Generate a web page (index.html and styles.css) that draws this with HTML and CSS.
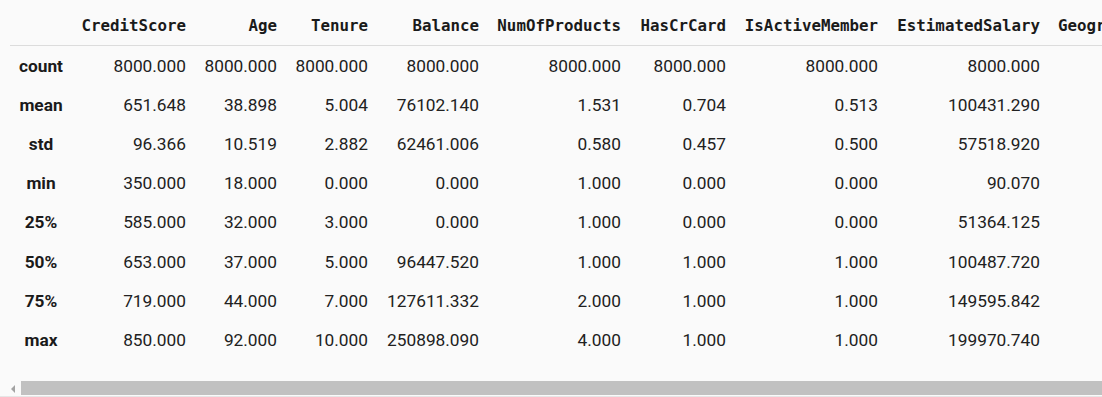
FILE: index.html
```html
<!DOCTYPE html>
<html lang="en">
  <head>
    <meta charset="UTF-8" />
    <title>describe()</title>
    <link rel="stylesheet" href="styles.css">
  </head>
  <body>
    <div class="output">
      <div class="output__frame">
        <table class="df">
          <colgroup>
            <col class="df__col-index" />
            <col style="width: 114px" />
            <col style="width: 91px" />
            <col style="width: 91px" />
            <col style="width: 111px" />
            <col style="width: 142px" />
            <col style="width: 105px" />
            <col style="width: 152px" />
            <col style="width: 162px" />
            <col style="width: 179px" />
          </colgroup>
          <thead>
            <tr class="df__head">
              <th></th>
              <th>CreditScore</th>
              <th>Age</th>
              <th>Tenure</th>
              <th>Balance</th>
              <th>NumOfProducts</th>
              <th>HasCrCard</th>
              <th>IsActiveMember</th>
              <th>EstimatedSalary</th>
              <th>Geography_Germany</th>
            </tr>
          </thead>
          <tbody>
            <tr>
              <th>count</th>
              <td>8000.000</td><td>8000.000</td><td>8000.000</td><td>8000.000</td>
              <td>8000.000</td><td>8000.000</td><td>8000.000</td><td>8000.000</td><td></td>
            </tr>
            <tr>
              <th>mean</th>
              <td>651.648</td><td>38.898</td><td>5.004</td><td>76102.140</td>
              <td>1.531</td><td>0.704</td><td>0.513</td><td>100431.290</td><td></td>
            </tr>
            <tr>
              <th>std</th>
              <td>96.366</td><td>10.519</td><td>2.882</td><td>62461.006</td>
              <td>0.580</td><td>0.457</td><td>0.500</td><td>57518.920</td><td></td>
            </tr>
            <tr>
              <th>min</th>
              <td>350.000</td><td>18.000</td><td>0.000</td><td>0.000</td>
              <td>1.000</td><td>0.000</td><td>0.000</td><td>90.070</td><td></td>
            </tr>
            <tr>
              <th>25%</th>
              <td>585.000</td><td>32.000</td><td>3.000</td><td>0.000</td>
              <td>1.000</td><td>0.000</td><td>0.000</td><td>51364.125</td><td></td>
            </tr>
            <tr>
              <th>50%</th>
              <td>653.000</td><td>37.000</td><td>5.000</td><td>96447.520</td>
              <td>1.000</td><td>1.000</td><td>1.000</td><td>100487.720</td><td></td>
            </tr>
            <tr>
              <th>75%</th>
              <td>719.000</td><td>44.000</td><td>7.000</td><td>127611.332</td>
              <td>2.000</td><td>1.000</td><td>1.000</td><td>149595.842</td><td></td>
            </tr>
            <tr>
              <th>max</th>
              <td>850.000</td><td>92.000</td><td>10.000</td><td>250898.090</td>
              <td>4.000</td><td>1.000</td><td>1.000</td><td>199970.740</td><td></td>
            </tr>
          </tbody>
        </table>
      </div>
      <div class="hscroll">
        <span class="hscroll__arrow"></span>
        <div class="hscroll__thumb"></div>
      </div>
    </div>
  </body>
</html>
```

FILE: styles.css
```css
*,
*::before,
*::after {
  padding: 0;
  margin: 0;
  box-sizing: border-box;
}

body {
  background-color: #fafafa;
  font-family: "Roboto", "Liberation Sans", sans-serif;
  color: #212121;
  overflow: hidden;
}

.output {
  width: 1102px;
  height: 397px;
  display: flex;
  flex-flow: column;
}

.output__frame {
  height: 381px;
  overflow: hidden;
  padding-left: 10px;
}

/* dataframe */
.df {
  border-collapse: collapse;
  table-layout: fixed;
  width: 1209px;
  font-size: 17.3px;
}

.df__col-index {
  width: 62px;
}

.df__head {
  height: 45px;
}

.df__head th {
  font-family: "DejaVu Sans Mono", "Liberation Mono", monospace;
  font-size: 15.8px;
  font-weight: 700;
  color: #1a1a1a;
  text-align: right;
  white-space: nowrap;
  padding-top: 7px;
  border-bottom: 1px solid #dcdcdc;
}

.df__head th:last-child {
  text-align: left;
  padding-left: 18px;
}

.df tbody tr {
  height: 39.1px;
}

.df tbody th,
.df td {
  padding-top: 3px;
}

.df tbody th {
  font-weight: 700;
  text-align: center;
  color: #1a1a1a;
}

.df td {
  text-align: right;
  white-space: nowrap;
}

/* horizontal scrollbar */
.hscroll {
  height: 16px;
  display: flex;
  align-items: stretch;
  border-bottom: 1px solid #e6e6e6;
  background-color: #fafafa;
}

.hscroll__arrow {
  width: 21px;
  display: flex;
  justify-content: center;
  align-items: center;
  padding-left: 4px;
}

.hscroll__arrow::before {
  content: "";
  border-top: 4px solid transparent;
  border-bottom: 4px solid transparent;
  border-right: 4px solid #a3a3a3;
}

.hscroll__thumb {
  flex: 1;
  height: 14px;
  background-color: #c1c1c1;
}
```
